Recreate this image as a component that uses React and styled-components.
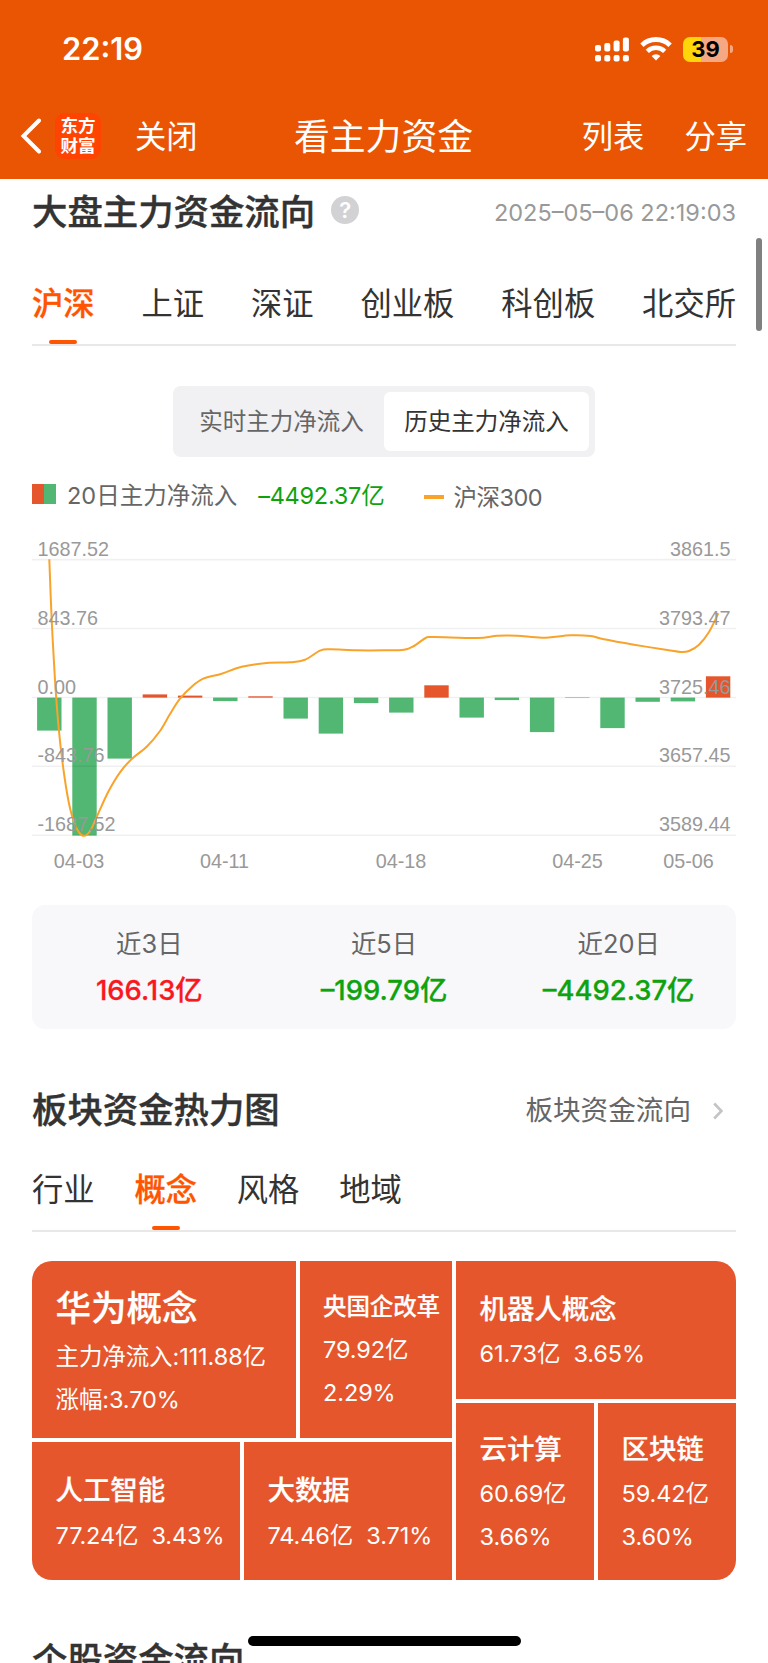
import React, { useState } from 'react';
import styled, { createGlobalStyle } from 'styled-components';

const GlobalStyle = createGlobalStyle`
  * {
    box-sizing: border-box;
  }

  body {
    margin: 0;
    background: #fff;
    color: #333;
    font-family: Inter, 'Noto Sans CJK SC', sans-serif;
  }
`;

const Page = styled.div`
  position: relative;
  width: 768px;
  height: 1663px;
  overflow: hidden;
`;

const TopBar = styled.header`
  height: 179px;
  background: #ea5504;
  color: #fff;
`;

const StatusBar = styled.div`
  display: flex;
  align-items: center;
  justify-content: space-between;
  height: 98px;
  padding: 0 35px 0 62px;
`;

const Clock = styled.div`
  padding-bottom: 1px;
  font-size: 30.8px;
  font-weight: 600;
`;

const StatusIcons = styled.div`
  display: flex;
  align-items: center;
  gap: 11px;
`;

const BatteryWrap = styled.div`
  display: flex;
  align-items: center;
  gap: 2px;
`;

const Battery = styled.div`
  width: 45px;
  height: 25px;
  border-radius: 7px;
  background: linear-gradient(to right, #ffd60a 39%, #f6a883 39%);
  color: #000;
  font-size: 22px;
  font-weight: 700;
  line-height: 25px;
  text-align: center;
`;

const BatteryTip = styled.div`
  width: 3px;
  height: 8px;
  border-radius: 0 3px 3px 0;
  background: #f6a883;
`;

const NavBar = styled.nav`
  display: grid;
  grid-template-columns: 1fr auto 1fr;
  align-items: center;
  height: 72px;
  padding: 0 21px 0 20px;
  font-size: 31.3px;
`;

const NavSide = styled.div`
  display: flex;
  align-items: center;
  justify-content: ${(props) => (props.$right ? 'flex-end' : 'flex-start')};
  gap: ${(props) => (props.$right ? '40px' : '0')};
`;

const NavTitle = styled.div`
  font-size: 35.8px;
`;

const Logo = styled.div`
  display: flex;
  align-items: center;
  justify-content: center;
  width: 46px;
  height: 46px;
  margin: 3px 34px 0 14px;
  border-radius: 9px;
  background: #ff4402;
  font-size: 17.6px;
  font-weight: 700;
  line-height: 19.5px;
`;

const BackIcon = styled.svg`
  margin-top: 3px;
`;

const Section = styled.section`
  padding: 0 32px;
`;

const SectionHead = styled.div`
  display: flex;
  align-items: center;
  height: ${(props) => props.$height}px;
  padding-top: ${(props) => props.$top}px;
`;

const Title = styled.h2`
  margin: 0;
  font-size: 35.4px;
  font-weight: 500;
  line-height: 50px;
  -webkit-text-stroke: 0.4px #333;
`;

const Help = styled.span`
  width: 28px;
  height: 28px;
  margin: 0 0 5px 16px;
  border-radius: 50%;
  background: #d2d2d4;
  color: #fff;
  font-size: 22px;
  font-weight: 600;
  line-height: 28px;
  text-align: center;
`;

const Time = styled.span`
  margin-left: auto;
  padding-bottom: 1px;
  color: #999;
  font-size: 23.5px;
`;

const MoreLink = styled.a`
  display: flex;
  align-items: center;
  gap: 22px;
  margin-left: auto;
  padding: 0 13px 5px 0;
  color: #666;
  font-size: 27.6px;

  svg {
    margin-top: 5px;
  }
`;

const TabBar = styled.div`
  display: flex;
  justify-content: ${(props) => (props.$spread ? 'space-between' : 'flex-start')};
  gap: ${(props) => (props.$spread ? '0' : '39.8px')};
  height: 65px;
  margin-top: ${(props) => (props.$spread ? '39px' : '0')};
  border-bottom: 2px solid #e8e8e9;
`;

const Tab = styled.button`
  display: flex;
  flex-direction: column;
  align-items: center;
  justify-content: space-between;
  height: 100%;
  padding: 0;
  border: 0;
  background: none;
  color: ${(props) => (props.$active ? '#ff5500' : '#333')};
  font: inherit;
  font-size: 31.3px;
  font-weight: ${(props) => (props.$active ? 500 : 400)};
  line-height: 47px;
  -webkit-text-stroke: ${(props) => (props.$active ? '0.3px #ff5500' : '0')};

  &::after {
    content: '';
    width: 28px;
    height: 4px;
    border-radius: 2px;
    background: ${(props) => (props.$active ? '#ff5500' : 'transparent')};
  }
`;

const Segment = styled.div`
  display: flex;
  width: 422px;
  height: 71px;
  margin: 40px auto 0;
  padding: 6px;
  border-radius: 8px;
  background: #f1f1f4;
`;

const SegmentItem = styled.button`
  flex: 1;
  padding: 0 0 4px;
  border: 0;
  border-radius: 6px;
  background: ${(props) => (props.$active ? '#fff' : 'transparent')};
  color: ${(props) => (props.$active ? '#333' : '#666')};
  font: inherit;
  font-size: 23.5px;
`;

const Legend = styled.div`
  display: flex;
  align-items: center;
  height: 83px;
  padding-bottom: 9px;
  color: #666;
  font-size: 23.5px;
`;

const BarSwatch = styled.i`
  width: 24px;
  height: 20px;
  margin: 0 11px 0 0;
  background: linear-gradient(to right, #e5562d 50%, #51b772 50%);
`;

const LineSwatch = styled.i`
  width: 20px;
  height: 4px;
  margin: 6px 9px 0 40px;
  background: #f9a32b;
`;

const LegendValue = styled.span`
  margin-left: 21px;
  color: #0ea30e;
  letter-spacing: -0.25px;
`;

const IndexName = styled.span`
  padding-top: 3px;
  letter-spacing: -0.5px;
`;

const Chart = styled.svg`
  display: block;
  width: 704px;
  height: 350px;
  overflow: visible;
  font-family: 'Liberation Sans', sans-serif;
  font-size: 19.8px;
`;

const Stats = styled.div`
  display: grid;
  grid-template-columns: repeat(3, 1fr);
  height: 124px;
  margin-top: 15px;
  padding-top: 17px;
  border-radius: 13px;
  background: #f8f8fb;
  text-align: center;
`;

const StatLabel = styled.div`
  height: 44px;
  color: #666;
  font-size: 25.4px;
  line-height: 44px;
`;

const StatValue = styled.div`
  color: ${(props) => (props.$up ? '#f8181f' : '#0ea30e')};
  font-size: 27.4px;
  font-weight: 500;
  line-height: 48px;
  -webkit-text-stroke: 0.3px currentColor;
`;

const HeatMap = styled.div`
  display: grid;
  grid-template-columns: 420px 280px;
  gap: 4px;
  height: 319px;
  margin-top: 29px;
  border-radius: 20px;
  overflow: hidden;
`;

const HeatGroup = styled.div`
  display: grid;
  grid-template-rows: ${(props) => props.$rows};
  gap: 4px;
`;

const HeatRow = styled.div`
  display: grid;
  grid-template-columns: ${(props) => props.$columns || '1fr'};
  gap: 4px;
`;

const Block = styled.div`
  padding: ${(props) => props.$top}px 0 0 23.5px;
  background: #e5562d;
  color: #fff;
  font-size: 23.5px;
  letter-spacing: -0.1px;
  line-height: 43.2px;
  white-space: pre;
`;

const BlockName = styled.div`
  font-size: ${(props) => props.$size}px;
  font-weight: 500;
  line-height: ${(props) => props.$line}px;
  -webkit-text-stroke: 0.2px #fff;
`;

const HomeIndicator = styled.div`
  position: absolute;
  bottom: 17px;
  left: 248px;
  width: 273px;
  height: 10px;
  border-radius: 5px;
  background: #000;
`;

const ScrollThumb = styled.div`
  position: absolute;
  top: 238px;
  right: 6px;
  width: 6px;
  height: 93px;
  border-radius: 3px;
  background: #808080;
`;

const markets = ['沪深', '上证', '深证', '创业板', '科创板', '北交所'];
const sectors = ['行业', '概念', '风格', '地域'];

const stats = [
  { label: '近3日', value: '166.13亿', up: true },
  { label: '近5日', value: '–199.79亿' },
  { label: '近20日', value: '–4492.37亿' },
];

// bar heights in px, positive is inflow
const flows = [
  -33, -138, -61, 3.2, 2, -3.5, 1.3, -21, -36, -5.5, -15, 12.3, -20, -2.5, -34.5,
  0.4, -30.5, -4.2, -3.8, 21.3,
];

const gridLines = [
  { y: 19.6, left: '1687.52', right: '3861.5' },
  { y: 88.5, left: '843.76', right: '3793.47' },
  { y: 157.5, left: '0.00', right: '3725.46' },
  { y: 226.3, left: '-843.76', right: '3657.45' },
  { y: 295.3, left: '-1687.52', right: '3589.44' },
];

const dates = [
  { x: 47, text: '04-03' },
  { x: 192.5, text: '04-11' },
  { x: 369, text: '04-18' },
  { x: 545.5, text: '04-25' },
  { x: 656.5, text: '05-06' },
];

const indexPoints = [
  [17.3, 19.3], [19.7, 80], [23, 140], [26.7, 188.3], [31.3, 228.3], [36.3, 260],
  [41.3, 280], [47, 292.3], [52.7, 295.7], [58.7, 290], [66.3, 273.3], [76.3, 251.7],
  [88, 232.3], [100, 218.7], [114.7, 206.7], [128, 191], [138, 174], [148, 158.7],
  [159.7, 146.7], [171.3, 138.7], [189.7, 133.7], [209.7, 126.7], [234.7, 123],
  [258, 122.3], [273, 119.7], [288, 110.7], [298, 109.3], [324.7, 110.3], [352, 110.3],
  [372, 109.7], [382, 106], [393.7, 98], [402, 97], [445.3, 98], [465.3, 95.7],
  [485.3, 95.7], [510.3, 97.7], [538.7, 95.3], [558.7, 96], [572, 99.3], [602, 104.7],
  [635.3, 110], [648.7, 112], [657, 111], [667, 104.7], [677, 92], [686.3, 73.3],
];

const smoothPath = (points) =>
  points.slice(1).reduce((path, point, i) => {
    const prev = points[i - 1] || points[i];
    const from = points[i];
    const next = points[i + 2] || point;
    const c1 = [from[0] + (point[0] - prev[0]) / 6, from[1] + (point[1] - prev[1]) / 6];
    const c2 = [point[0] - (next[0] - from[0]) / 6, point[1] - (next[1] - from[1]) / 6];
    return `${path} C${c1} ${c2} ${point}`;
  }, `M${points[0]}`);

const SignalIcon = () => (
  <svg width="34" height="25" viewBox="0 0 34 25" fill="#fff">
    {[8, 6, 3.5, 0.5].map((y, i) => (
      <g key={y}>
        <rect x={i * 9.3} y={y} width="6" height={14.5 - y} rx="2" />
        <rect x={i * 9.3} y="18" width="6" height="6.5" rx="2" />
      </g>
    ))}
  </svg>
);

const WifiIcon = () => (
  <svg width="32" height="24" viewBox="0 0 32 24" fill="none" stroke="#fff">
    <path d="M1.9 8.2a20.3 20.3 0 0 1 28.2 0" strokeWidth="4.8" />
    <path d="M7.3 14.3a12.6 12.6 0 0 1 17.4 0" strokeWidth="4.6" />
    <path d="M16 23.5l-4.4-4.5a6.4 6.4 0 0 1 8.8 0z" fill="#fff" stroke="none" />
  </svg>
);

const FundChart = () => (
  <Chart viewBox="0 0 704 350">
    {flows.map((flow, i) => (
      <rect
        key={i}
        x={5.1 + i * 35.2}
        y={flow > 0 ? 157.6 - flow : 157.6}
        width="24.4"
        height={Math.abs(flow)}
        fill={flow > 0 ? '#e5562d' : '#51b772'}
      />
    ))}
    {gridLines.map(({ y }) => (
      <line key={y} x1="0" x2="704" y1={y} y2={y} stroke="#000" strokeOpacity="0.06" strokeWidth="1.6" />
    ))}
    <path d={smoothPath(indexPoints)} fill="none" stroke="#f9a32b" strokeWidth="2" />
    <g fill="#999">
      {gridLines.map(({ y, left, right }) => (
        <g key={y}>
          <text x="5.5" y={y - 4}>{left}</text>
          <text x="698.5" y={y - 4} textAnchor="end">{right}</text>
        </g>
      ))}
      {dates.map(({ x, text }) => (
        <text key={text} x={x} y="328" textAnchor="middle">{text}</text>
      ))}
    </g>
  </Chart>
);

const HeatBlock = ({ name, lines, size = 27.5, line = 47.5, top }) => (
  <Block $top={top}>
    <BlockName $size={size} $line={line}>{name}</BlockName>
    {lines.map((text) => (
      <div key={text}>{text}</div>
    ))}
  </Block>
);

const App = () => {
  const [market, setMarket] = useState('沪深');
  const [sector, setSector] = useState('概念');
  const [history, setHistory] = useState(true);

  return (
    <Page>
      <GlobalStyle />
      <TopBar>
        <StatusBar>
          <Clock>22:19</Clock>
          <StatusIcons>
            <SignalIcon />
            <WifiIcon />
            <BatteryWrap>
              <Battery>39</Battery>
              <BatteryTip />
            </BatteryWrap>
          </StatusIcons>
        </StatusBar>
        <NavBar>
          <NavSide>
            <BackIcon width="21" height="36" viewBox="0 0 21 36" fill="none" stroke="#fff" strokeWidth="4">
              <path d="M19 2.5L3.5 18 19 33.5" strokeLinecap="round" />
            </BackIcon>
            <Logo>东方<br />财富</Logo>
            关闭
          </NavSide>
          <NavTitle>看主力资金</NavTitle>
          <NavSide $right>
            <span>列表</span>
            <span>分享</span>
          </NavSide>
        </NavBar>
      </TopBar>

      <Section>
        <SectionHead $height={63} $top={4}>
          <Title>大盘主力资金流向</Title>
          <Help>?</Help>
          <Time>2025–05–06 22:19:03</Time>
        </SectionHead>
        <TabBar $spread>
          {markets.map((name) => (
            <Tab key={name} $active={name === market} onClick={() => setMarket(name)}>
              {name}
            </Tab>
          ))}
        </TabBar>
        <Segment>
          <SegmentItem $active={!history} onClick={() => setHistory(false)}>实时主力净流入</SegmentItem>
          <SegmentItem $active={history} onClick={() => setHistory(true)}>历史主力净流入</SegmentItem>
        </Segment>
        <Legend>
          <BarSwatch />
          20日主力净流入
          <LegendValue>–4492.37亿</LegendValue>
          <LineSwatch />
          <IndexName>沪深300</IndexName>
        </Legend>
        <FundChart />
        <Stats>
          {stats.map(({ label, value, up }) => (
            <div key={label}>
              <StatLabel>{label}</StatLabel>
              <StatValue $up={up}>{value}</StatValue>
            </div>
          ))}
        </Stats>
      </Section>

      <Section>
        <SectionHead $height={138} $top={25}>
          <Title>板块资金热力图</Title>
          <MoreLink>
            板块资金流向
            <svg width="10" height="18" viewBox="0 0 10 18" fill="none" stroke="#c4c4c6" strokeWidth="2.6">
              <path d="M1.2 1.5L8.4 9l-7.2 7.5" />
            </svg>
          </MoreLink>
        </SectionHead>
        <TabBar>
          {sectors.map((name) => (
            <Tab key={name} $active={name === sector} onClick={() => setSector(name)}>
              {name}
            </Tab>
          ))}
        </TabBar>
        <HeatMap>
          <HeatGroup $rows="177fr 138fr">
            <HeatRow $columns="263.5fr 152.5fr">
              <HeatBlock name="华为概念" size={35.6} line={52} top={21.5} lines={['主力净流入:111.88亿', '涨幅:3.70%']} />
              <HeatBlock name="央国企改革" size={23.5} line={42} top={25} lines={['79.92亿', '2.29%']} />
            </HeatRow>
            <HeatRow $columns="1fr 1fr">
              <HeatBlock name="人工智能" top={24.5} lines={['77.24亿  3.43%']} />
              <HeatBlock name="大数据" top={24.5} lines={['74.46亿  3.71%']} />
            </HeatRow>
          </HeatGroup>
          <HeatGroup $rows="138fr 177fr">
            <HeatRow>
              <HeatBlock name="机器人概念" top={24.5} line={46.5} lines={['61.73亿  3.65%']} />
            </HeatRow>
            <HeatRow $columns="1fr 1fr">
              <HeatBlock name="云计算" top={22.5} line={46.5} lines={['60.69亿', '3.66%']} />
              <HeatBlock name="区块链" top={22.5} line={46.5} lines={['59.42亿', '3.60%']} />
            </HeatRow>
          </HeatGroup>
        </HeatMap>
      </Section>

      <Section>
        <SectionHead $height={162} $top={0}>
          <Title>个股资金流向</Title>
        </SectionHead>
      </Section>
      <ScrollThumb />
      <HomeIndicator />
    </Page>
  );
};

export default App;
